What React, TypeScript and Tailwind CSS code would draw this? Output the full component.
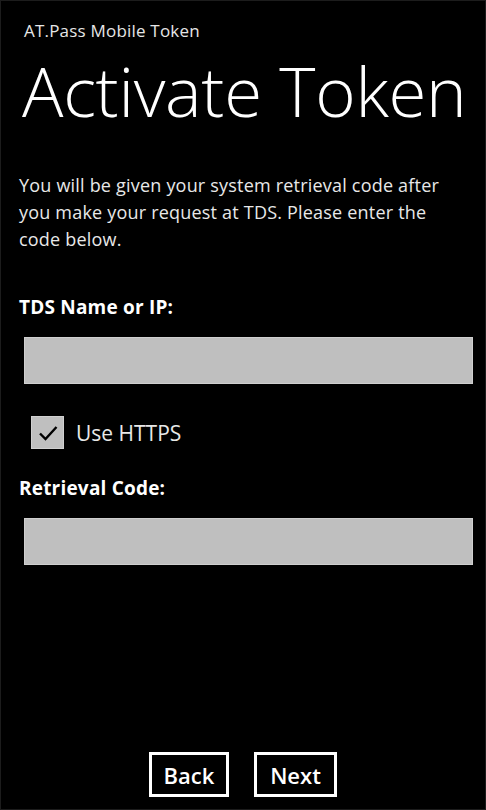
import React from 'react';

const font = { fontFamily: '"Open Sans", "Noto Sans", sans-serif' };

export default function App() {
  return (
    <div
      className="w-[486px] h-[810px] bg-black text-white flex flex-col border border-[#1c1c1c] overflow-hidden"
      style={font}
    >
      {/* Header */}
      <div className="pl-[23px] pt-[19px] text-[17px] leading-[22px] tracking-[0.2px] text-[#e6e6e6]">AT.Pass Mobile Token</div>
      <div className="pl-[21px] mt-[5px] text-[69px] leading-[86px] font-light tracking-[-0.3px]">Activate Token</div>

      {/* Intro */}
      <p className="pl-[18px] w-[460px] mt-[39px] text-[18px] leading-[27px] tracking-[0.2px] text-[#e8e8e8]">
        You will be given your system retrieval code after you make your request at TDS. Please enter the code below.
      </p>

      {/* TDS */}
      <div className="pl-[18px] mt-[44px] text-[19px] leading-[20px] tracking-[0.2px] font-bold">TDS Name or IP:</div>
      <div className="ml-[23px] mr-[12px] mt-[20px] h-[47px] bg-[#bfbfbf] border border-[#cfcfcf]" />

      {/* Checkbox */}
      <div className="flex items-center ml-[30px] mt-[32px] gap-[12px]">
        <div className="w-[33px] h-[33px] bg-[#bfbfbf] border border-[#d0d0d0] flex items-center justify-center">
          <svg width="24" height="24" viewBox="0 0 24 24" fill="none">
            <path d="M4 12.5 L9.5 18 L20.5 6" stroke="#000" strokeWidth="2.4" />
          </svg>
        </div>
        <span className="text-[21px] leading-[24px] text-[#e8e8e8]">Use HTTPS</span>
      </div>

      {/* Retrieval */}
      <div className="pl-[18px] mt-[29px] text-[19px] leading-[20px] tracking-[0.2px] font-bold">Retrieval Code:</div>
      <div className="ml-[23px] mr-[12px] mt-[20px] h-[47px] bg-[#bfbfbf] border border-[#cfcfcf]" />

      {/* Buttons */}
      <div className="mt-auto mb-[12px] flex justify-center gap-[25px]">
        <button className="w-[80px] h-[45px] border-[3px] border-white text-[22px] font-semibold leading-none">Back</button>
        <button className="w-[83px] h-[45px] border-[3px] border-white text-[22px] font-semibold leading-none">Next</button>
      </div>
    </div>
  );
}
